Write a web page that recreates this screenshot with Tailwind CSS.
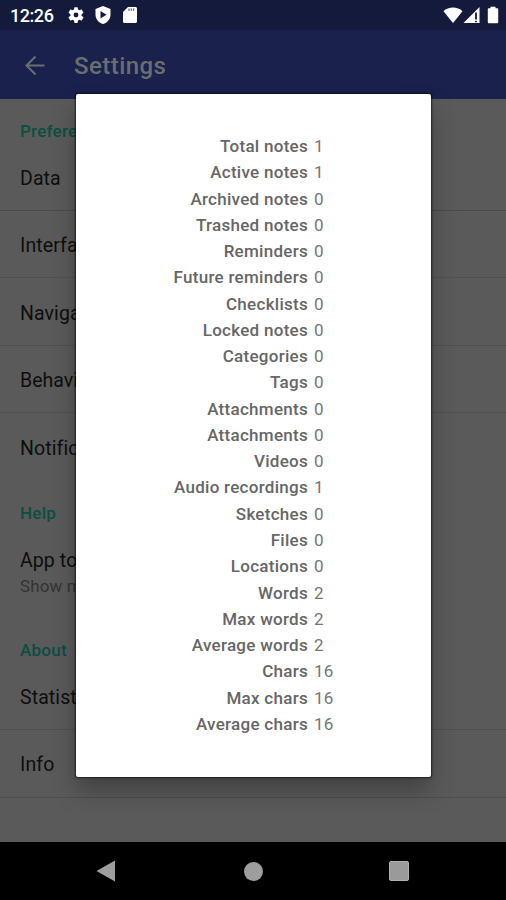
<!DOCTYPE html>
<html lang="en">
<head>
<meta charset="utf-8">
<title>Settings</title>
<script src="https://cdn.jsdelivr.net/npm/@tailwindcss/browser@4"></script>
</head>
<body class="bg-black">
<div class="relative flex h-[900px] w-[506px] flex-col overflow-hidden bg-black font-[Roboto,sans-serif]">
  <div class="flex h-[30px] shrink-0 items-center bg-[#131a3c] pl-[10px] pr-[7px] text-white">
    <span class="w-[57px] text-[18px] font-medium leading-[30px] tracking-[-0.45px] pt-[2px]">12:26</span>
    <svg class="h-[18px] w-[18px]" viewBox="0 0 24 24" fill="currentColor"><path fill-rule="evenodd" d="M19.4 13a7.5 7.5 0 0 0 0-2l2.3-1.8a.5.5 0 0 0 .1-.7l-2.100-3.700a.5.5 0 0 0-.7-.2l-2.600 1.100a8 8 0 0 0-1.800-1L14.200 1.900a.5.5 0 0 0-.5-.4h-3.400a.5.5 0 0 0-.5.4l-.4 2.800a8 8 0 0 0-1.800 1L5 4.600a.5.5 0 0 0-.7.2L2.200 8.500a.5.5 0 0 0 .1.700L4.600 11a7.500 7.500 0 0 0 0 2l-2.300 1.800a.5.5 0 0 0-.1.700l2.100 3.700c.1.200.4.300.7.200l2.600-1.100a8 8 0 0 0 1.800 1l.4 2.800c0 .2.200.4.500.4h3.400c.3 0 .5-.2.500-.4l.4-2.800a8 8 0 0 0 1.800-1l2.600 1.100c.3.100.6 0 .7-.2l2.100-3.700a.5.5 0 0 0-.1-.7zM12 15.200a3.200 3.200 0 1 1 0-6.400 3.200 3.200 0 0 1 0 6.400z"/></svg>
    <svg class="ml-[9px] h-[20px] w-[18px]" viewBox="0 0 18 20"><path fill="currentColor" d="M9 1 1.500 4v5.500C1.500 14 4.700 17.800 9 19c4.300-1.200 7.500-5 7.500-9.500V4z"/><path fill="#131a3c" d="m6.500 6 6 3.700-6 3.700z"/></svg>
    <svg class="ml-[10px] h-[18px] w-[16px]" viewBox="0 0 16 18"><path fill="currentColor" d="M6 1h7.500c.8 0 1.500.7 1.500 1.500v13c0 .8-.7 1.500-1.500 1.500h-11C1.700 17 1 16.300 1 15.500V6z"/><path stroke="#131a3c" stroke-opacity=".7" stroke-width="1.200" d="M7 2.500v2.300M9.300 2.500v2.300M11.600 2.500v2.300"/></svg>
    <svg class="ml-auto h-[18px] w-[20px]" viewBox="0 0 20 18"><path fill="currentColor" d="M.5 5.200C5.500.3 14.500.3 19.500 5.200L10 17z"/></svg>
    <svg class="h-[18px] w-[17px]" viewBox="0 0 17 18"><path fill="currentColor" d="M.5 17 16.500 1v16z"/><path stroke="#131a3c" stroke-width="1.800" d="M13 6.500v7M13 14.800v1.400"/></svg>
    <svg class="ml-[7px] h-[18px] w-[12px]" viewBox="0 0 12 18"><path fill="currentColor" d="M3.500.8h5v1.400h1.700c.5 0 1 .4 1 1v13.100c0 .5-.5 1-1 1H1.800c-.5 0-1-.5-1-1V3.200c0-.6.5-1 1-1h1.700z"/></svg>
  </div>
  <div class="flex h-[68.500px] shrink-0 items-center bg-[#1a214c] pl-[24px] pt-[3px] text-[#6b6d70]">
    <svg class="h-[22px] w-[22px]" viewBox="0 0 22 22" fill="none" stroke="currentColor" stroke-width="2"><path d="M20.500 10.500H3M11.500 1.500l-9 9 9 9"/></svg>
    <h1 class="ml-[28px] pt-[1px] text-[24px] font-medium tracking-[0.45px]">Settings</h1>
  </div>
  <main class="flex h-[743.500px] shrink-0 flex-col bg-[#5a5a5a] text-[19.500px] tracking-[0.1px] text-[#0e0e0e]">
    <h2 class="flex h-[44.500px] items-end pb-[1px] pl-[20px] text-[17px] font-medium leading-[22px] tracking-[0.25px] text-[#0c4e42]">Preferences</h2>
    <div class="flex h-[67.500px] items-center border-b border-[#4c4c4c] pl-[20px] pt-[4px]">Data</div>
    <div class="flex h-[67.500px] items-center border-b border-[#515151] pl-[20px] pt-[3px]">Interface</div>
    <div class="flex h-[67.500px] items-center border-b border-[#4f4f4f] pl-[20px] pt-[4px]">Navigation</div>
    <div class="flex h-[67.500px] items-center border-b border-[#4f4f4f] pl-[20px] pt-[3px] tracking-[0px]">Behaviour</div>
    <div class="flex h-[67.500px] items-center pl-[20px] pt-[3px]">Notifications</div>
    <h2 class="flex h-[45px] items-end pb-[1.500px] pl-[20px] text-[17px] font-medium leading-[22px] tracking-[0.25px] text-[#0c4e42]">Help</h2>
    <div class="flex h-[91.500px] flex-col justify-center pl-[20px] pt-[3px]"><span class="leading-[26px]">App tour</span><span class="text-[17px] leading-[24px] text-[#333]">Show me the app tour again</span></div>
    <h2 class="flex h-[45px] items-end pb-[1px] pl-[20px] text-[17px] font-medium leading-[22px] tracking-[0.25px] text-[#0c4e42]">About</h2>
    <div class="flex h-[67.500px] items-center border-b border-[#4f4f4f] pl-[20px] pt-[4px]">Statistics</div>
    <div class="flex h-[68px] items-center border-b border-[#4f4f4f] pl-[20px] pt-[3px]">Info</div>
  </main>
  <nav class="flex flex-1 items-center pl-[96px] text-[#9e9e9e]">
    <svg class="h-[22px] w-[19px]" viewBox="0 0 19 22"><path fill="currentColor" d="M19 .5v21L.5 11z"/></svg>
    <div class="ml-[129px] size-[19px] rounded-full bg-[#9e9e9e]"></div>
    <div class="ml-[126px] size-[20px] rounded-[2px] border border-[#b0b0b0] bg-[#9a9a9a]"></div>
  </nav>
  <section class="absolute left-[76px] top-[94px] grid h-[683px] w-[355px] auto-rows-[26.270px] grid-cols-[232px_1fr] content-start gap-x-[6px] rounded-[2px] bg-white pt-[39px] text-[17px] leading-[26.270px] tracking-[0.28px] text-[#757575] shadow-[0_0_2px_1px_rgba(0,0,0,0.6),0_14px_24px_rgba(0,0,0,0.28)] [&>b]:text-right [&>b]:font-medium [&>b]:text-[#666]">
    <b>Total notes</b><span>1</span>
    <b>Active notes</b><span>1</span>
    <b>Archived notes</b><span>0</span>
    <b>Trashed notes</b><span>0</span>
    <b>Reminders</b><span>0</span>
    <b>Future reminders</b><span>0</span>
    <b>Checklists</b><span>0</span>
    <b>Locked notes</b><span>0</span>
    <b>Categories</b><span>0</span>
    <b>Tags</b><span>0</span>
    <b>Attachments</b><span>0</span>
    <b>Attachments</b><span>0</span>
    <b>Videos</b><span>0</span>
    <b>Audio recordings</b><span>1</span>
    <b>Sketches</b><span>0</span>
    <b>Files</b><span>0</span>
    <b>Locations</b><span>0</span>
    <b>Words</b><span>2</span>
    <b>Max words</b><span>2</span>
    <b>Average words</b><span>2</span>
    <b>Chars</b><span>16</span>
    <b>Max chars</b><span>16</span>
    <b>Average chars</b><span>16</span>
  </section>
</div>
</body>
</html>
